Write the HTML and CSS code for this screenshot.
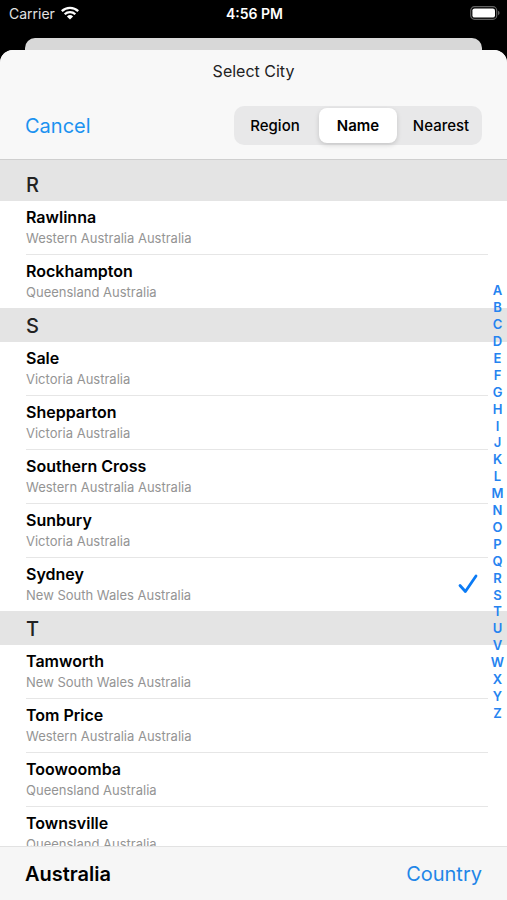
FILE: index.html
```
<!DOCTYPE html>
<html lang="en">
<head>
<meta charset="utf-8">
<meta name="viewport" content="width=device-width, initial-scale=1">
<title>Select City</title>
<link rel="stylesheet" href="styles.css">
</head>
<body>
<div class="status">
  <div class="carrier">Carrier
    <svg class="wifi" viewBox="0 0 18 14" aria-hidden="true"><g fill="none" stroke="#fff" stroke-width="2.3"><path d="M.8 5.1a11.8 11.8 0 0 1 16.4 0"/><path d="M3.7 8.3a7.6 7.6 0 0 1 10.6 0"/></g><path fill="#fff" d="M9 13.6l-3.1-3.2a4.5 4.5 0 0 1 6.2 0z"/></svg>
  </div>
  <div class="time">4:56 PM</div>
  <svg class="battery" viewBox="0 0 30 14" aria-hidden="true"><rect x=".7" y=".7" width="26" height="12.6" rx="3.8" fill="none" stroke="#626262" stroke-width="1.2"/><rect x="2.4" y="2.4" width="22.6" height="9.2" rx="2.2" fill="#fff"/><path d="M28 4.8q1.6.6 1.6 2.2T28 9.2z" fill="#626262"/></svg>
</div>
<div class="behind"></div>
<main class="sheet">
  <header class="top">
    <h1>Select City</h1>
    <div class="tools">
      <button class="link" type="button">Cancel</button>
      <div class="segments" role="group" aria-label="Sort cities">
        <button type="button">Region</button>
        <button type="button" class="active" aria-pressed="true">Name</button>
        <button type="button">Nearest</button>
      </div>
    </div>
  </header>
  <div class="body">
    <div class="list">
      <section>
        <h2>R</h2>
        <ul>
          <li><b>Rawlinna</b><span>Western Australia Australia</span></li>
          <li><b>Rockhampton</b><span>Queensland Australia</span></li>
        </ul>
      </section>
      <section>
        <h2>S</h2>
        <ul>
          <li><b>Sale</b><span>Victoria Australia</span></li>
          <li><b>Shepparton</b><span>Victoria Australia</span></li>
          <li><b>Southern Cross</b><span>Western Australia Australia</span></li>
          <li><b>Sunbury</b><span>Victoria Australia</span></li>
          <li><b>Sydney</b><span>New South Wales Australia</span><svg class="check" viewBox="0 0 20 20" role="img" aria-label="Selected"><path d="M2 11.5l5.4 6L18 2"/></svg></li>
        </ul>
      </section>
      <section>
        <h2>T</h2>
        <ul>
          <li><b>Tamworth</b><span>New South Wales Australia</span></li>
          <li><b>Tom Price</b><span>Western Australia Australia</span></li>
          <li><b>Toowoomba</b><span>Queensland Australia</span></li>
          <li><b>Townsville</b><span>Queensland Australia</span></li>
        </ul>
      </section>
    </div>
    <nav class="index" aria-label="Index">
      <a href="#A">A</a><a href="#B">B</a><a href="#C">C</a><a href="#D">D</a><a href="#E">E</a><a href="#F">F</a><a href="#G">G</a><a href="#H">H</a><a href="#I">I</a><a href="#J">J</a><a href="#K">K</a><a href="#L">L</a><a href="#M">M</a><a href="#N">N</a><a href="#O">O</a><a href="#P">P</a><a href="#Q">Q</a><a href="#R">R</a><a href="#S">S</a><a href="#T">T</a><a href="#U">U</a><a href="#V">V</a><a href="#W">W</a><a href="#X">X</a><a href="#Y">Y</a><a href="#Z">Z</a>
    </nav>
  </div>
  <footer class="bottom">
    <strong>Australia</strong>
    <button class="link country" type="button">Country</button>
  </footer>
</main>
</body>
</html>
```
FILE: styles.css
```
* { box-sizing: border-box; }
body {
  margin: 0;
  height: 100vh;
  display: flex;
  flex-direction: column;
  overflow: hidden;
  background: #000;
  color: #000;
  font-family: Inter, "Liberation Sans", sans-serif;
}
h1, h2, ul { margin: 0; padding: 0; }
button {
  border: 0;
  padding: 0;
  background: none;
  color: inherit;
  font: inherit;
}
.status {
  display: grid;
  grid-template-columns: 1fr auto 1fr;
  align-items: center;
  height: 26px;
  padding: 0 7px 0 9px;
  color: #fff;
  font-size: 14px;
}
.carrier { display: flex; align-items: center; gap: 6px; color: #e2e2e2; }
.wifi { width: 18px; height: 14px; }
.time { font-weight: 600; }
.battery { width: 30px; height: 14px; justify-self: end; }
.behind {
  height: 12px;
  margin: 12px 25px 0;
  border-radius: 10px 10px 0 0;
  background: #d8d8d8;
}
.sheet {
  flex: 1;
  min-height: 0;
  display: flex;
  flex-direction: column;
  border-radius: 13px 13px 0 0;
  overflow: hidden;
  background: #fff;
}
.top { background: #f8f8f8; border-bottom: 1px solid #cfcfcf; }
h1 {
  padding-top: 9px;
  font-size: 16px;
  font-weight: 400;
  line-height: 24px;
  text-align: center;
  color: #222;
}
.tools {
  display: flex;
  justify-content: space-between;
  align-items: center;
  padding: 23px 25px 14px;
}
.link { color: #1b92f0; font-size: 20px; line-height: 24px; }
.segments {
  display: grid;
  grid-template-columns: 1fr 1fr 1fr;
  gap: 5px;
  width: 248px;
  height: 39px;
  padding: 2px;
  border-radius: 10px;
  background: #e8e8e9;
  font-size: 15px;
  font-weight: 500;
}
.segments button { border-radius: 8px; }
.segments .active {
  background: #fff;
  font-weight: 600;
  box-shadow: 0 2px 5px rgba(0, 0, 0, .15);
}
.body { position: relative; flex: 1; min-height: 0; }
.list { height: 100%; overflow: hidden; }
h2 {
  padding: 2px 0 0 26px;
  background: #e4e4e4;
  color: #222;
  font-size: 20px;
  font-weight: 500;
  line-height: 32px;
}
section:first-child h2 { padding-top: 9px; }
ul { padding: 0 19px 0 26px; list-style: none; }
li {
  display: grid;
  grid-template-columns: 1fr auto;
  grid-template-rows: 22px 20px;
  height: 54px;
  padding: 5px 10px 0 0;
  border-bottom: 1px solid #e6e6e6;
}
li:last-child { height: 53px; border-bottom: 0; }
li b { grid-column: 1; font-size: 16px; font-weight: 600; line-height: 22px; }
li span { grid-column: 1; color: #949494; font-size: 13px; line-height: 20px; }
.check {
  grid-column: 2;
  grid-row: 1 / 3;
  align-self: center;
  width: 20px;
  height: 20px;
  fill: none;
  stroke: #0b7bf5;
  stroke-width: 2.8;
  stroke-linecap: round;
  stroke-linejoin: round;
}
.index {
  position: absolute;
  top: 18%;
  right: 0;
  width: 19px;
  height: 64%;
  display: flex;
  flex-direction: column;
}
.index a {
  flex: 1;
  min-height: 0;
  color: #2583f0;
  font-size: 13px;
  font-weight: 600;
  line-height: 15px;
  text-align: center;
  text-decoration: none;
}
.bottom {
  display: flex;
  justify-content: space-between;
  align-items: center;
  height: 54px;
  padding: 0 25px;
  border-top: 1px solid #e2e2e2;
  background: #f6f6f6;
}
.bottom strong { font-size: 20px; font-weight: 600; }
.country { color: #1f86e8; }
```
